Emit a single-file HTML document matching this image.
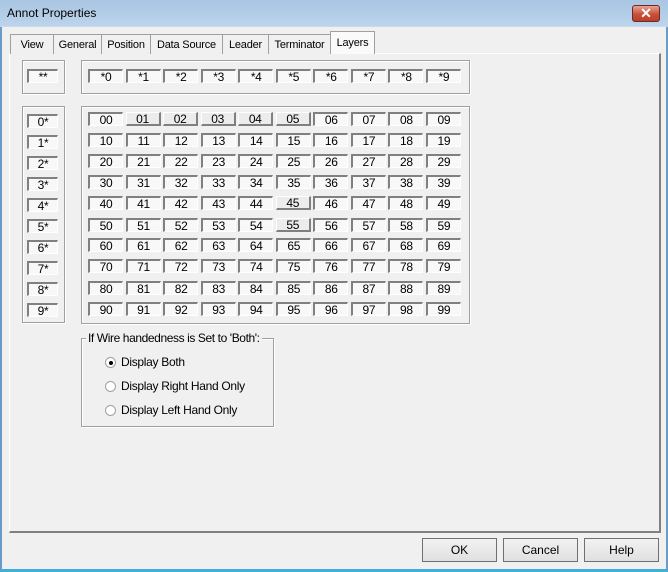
<!DOCTYPE html>
<html><head><style>
*{box-sizing:border-box;margin:0;padding:0}
body{width:668px;height:572px;overflow:hidden;background:#f0f0f0;font-family:"Liberation Sans",sans-serif;font-size:11px;color:#000;position:relative}
.win{position:absolute;inset:0;border-left:2px solid #6a9bc8;border-right:2px solid #6a9bc8;border-bottom:3px solid #3fb0d8;background:#f0f0f0}
.title{position:absolute;left:0;top:0;width:668px;height:27px;background:linear-gradient(#a9c5e2,#bcd4ec);border-bottom:1px solid #c9d9ea}
.title span{position:absolute;left:7px;top:6px;font-size:12px}
.close{position:absolute;left:632px;top:5px;width:28px;height:17px;border:1px solid #6b2a22;border-radius:3px;background:linear-gradient(#e8a392,#c7503b 55%,#b8402c);color:#fff;font-weight:bold;text-align:center;font-size:14px;line-height:15px}
.tab{position:absolute;top:34px;height:20px;border:1px solid #a0a0a0;border-bottom:none;background:#f0f0f0;padding:4px 0 0 0;text-align:center;white-space:nowrap;letter-spacing:-0.2px}
.tab.sel{top:31px;height:23px;background:#fafafa;z-index:2;padding-top:5px}
.panel{position:absolute;left:9px;top:53px;width:652px;height:480px;border-top:1px solid #fff;border-left:1px solid #fff;border-right:2px solid #808080;border-bottom:2px solid #808080;background:#f0f0f0}
.grp{position:absolute;border:1px solid #a0a0a0;box-shadow:1px 1px 0 #fff inset,1px 1px 0 #fff}
.c{position:absolute;height:14px;width:35px;text-align:center;line-height:12px;font-size:12px;border-top:2px solid #808080;border-left:2px solid #808080;border-right:1px solid #fff;border-bottom:1px solid #fff;background:#f8f8f8;letter-spacing:-0.3px}
.row{position:absolute;left:88px;height:14px;width:380px}
.row .c{position:relative;display:inline-block;margin-right:2.55px;float:left}
.r{border-top:1px solid #fff;border-left:1px solid #fff;border-right:2px solid #808080;border-bottom:2px solid #808080;background:#ececec;line-height:12px}
.btn{position:absolute;top:538px;width:75px;height:24px;border:1px solid #707070;background:linear-gradient(#f2f2f2,#e0e0e0);text-align:center;line-height:22px;font-size:12px}
.rad{position:absolute;left:105px;}
.rad i{position:absolute;left:0;top:1px;width:11px;height:11px;border-radius:50%;border:1px solid #a0a0a0;background:#fff}
.rad i b{position:absolute;left:3px;top:3px;width:4px;height:4px;border-radius:50%;background:#000}
.rad span{position:absolute;left:16px;top:-1px;white-space:nowrap;letter-spacing:-0.3px;font-size:12px}
</style></head><body>
<div class="win"></div>
<div class="title"><span>Annot Properties</span><div class="close">✕</div></div>
<div class="panel"></div>
<div class="tab" style="left:10px;width:44px">View</div>
<div class="tab" style="left:53px;width:49px">General</div>
<div class="tab" style="left:101px;width:50px">Position</div>
<div class="tab" style="left:150px;width:73px">Data Source</div>
<div class="tab" style="left:222px;width:47px">Leader</div>
<div class="tab" style="left:268px;width:63px">Terminator</div>
<div class="tab sel" style="left:330px;width:45px">Layers</div>

<div class="grp" style="left:22px;top:60px;width:43px;height:34px"></div>
<div class="grp" style="left:81px;top:60px;width:389px;height:34px"></div>
<div class="grp" style="left:22px;top:106px;width:43px;height:217px"></div>
<div class="grp" style="left:81px;top:106px;width:389px;height:218px"></div>

<div class="c" style="left:27px;top:69px;width:31px">**</div>
<div class="row" style="top:69px"><div class="c">*0</div><div class="c">*1</div><div class="c">*2</div><div class="c">*3</div><div class="c">*4</div><div class="c">*5</div><div class="c">*6</div><div class="c">*7</div><div class="c">*8</div><div class="c">*9</div></div>

<div class="c" style="left:27px;top:114px;width:31px">0*</div>
<div class="c" style="left:27px;top:135px;width:31px">1*</div>
<div class="c" style="left:27px;top:156px;width:31px">2*</div>
<div class="c" style="left:27px;top:177px;width:31px">3*</div>
<div class="c" style="left:27px;top:198px;width:31px">4*</div>
<div class="c" style="left:27px;top:219px;width:31px">5*</div>
<div class="c" style="left:27px;top:240px;width:31px">6*</div>
<div class="c" style="left:27px;top:261px;width:31px">7*</div>
<div class="c" style="left:27px;top:282px;width:31px">8*</div>
<div class="c" style="left:27px;top:303px;width:31px">9*</div>

<div class="row" style="top:112px"><div class="c">00</div><div class="c r">01</div><div class="c r">02</div><div class="c r">03</div><div class="c r">04</div><div class="c r">05</div><div class="c">06</div><div class="c">07</div><div class="c">08</div><div class="c">09</div></div>
<div class="row" style="top:133px"><div class="c">10</div><div class="c">11</div><div class="c">12</div><div class="c">13</div><div class="c">14</div><div class="c">15</div><div class="c">16</div><div class="c">17</div><div class="c">18</div><div class="c">19</div></div>
<div class="row" style="top:154px"><div class="c">20</div><div class="c">21</div><div class="c">22</div><div class="c">23</div><div class="c">24</div><div class="c">25</div><div class="c">26</div><div class="c">27</div><div class="c">28</div><div class="c">29</div></div>
<div class="row" style="top:175px"><div class="c">30</div><div class="c">31</div><div class="c">32</div><div class="c">33</div><div class="c">34</div><div class="c">35</div><div class="c">36</div><div class="c">37</div><div class="c">38</div><div class="c">39</div></div>
<div class="row" style="top:196px"><div class="c">40</div><div class="c">41</div><div class="c">42</div><div class="c">43</div><div class="c">44</div><div class="c r">45</div><div class="c">46</div><div class="c">47</div><div class="c">48</div><div class="c">49</div></div>
<div class="row" style="top:218px"><div class="c">50</div><div class="c">51</div><div class="c">52</div><div class="c">53</div><div class="c">54</div><div class="c r">55</div><div class="c">56</div><div class="c">57</div><div class="c">58</div><div class="c">59</div></div>
<div class="row" style="top:238px"><div class="c">60</div><div class="c">61</div><div class="c">62</div><div class="c">63</div><div class="c">64</div><div class="c">65</div><div class="c">66</div><div class="c">67</div><div class="c">68</div><div class="c">69</div></div>
<div class="row" style="top:259px"><div class="c">70</div><div class="c">71</div><div class="c">72</div><div class="c">73</div><div class="c">74</div><div class="c">75</div><div class="c">76</div><div class="c">77</div><div class="c">78</div><div class="c">79</div></div>
<div class="row" style="top:281px"><div class="c">80</div><div class="c">81</div><div class="c">82</div><div class="c">83</div><div class="c">84</div><div class="c">85</div><div class="c">86</div><div class="c">87</div><div class="c">88</div><div class="c">89</div></div>
<div class="row" style="top:302px"><div class="c">90</div><div class="c">91</div><div class="c">92</div><div class="c">93</div><div class="c">94</div><div class="c">95</div><div class="c">96</div><div class="c">97</div><div class="c">98</div><div class="c">99</div></div>

<div class="grp" style="left:81px;top:338px;width:193px;height:89px"></div>
<div style="position:absolute;left:86px;top:331px;background:#f0f0f0;padding:0 2px;font-size:12px;letter-spacing:-0.4px">If Wire handedness is Set to 'Both':</div>
<div class="rad" style="top:356px"><i><b></b></i><span>Display Both</span></div>
<div class="rad" style="top:380px"><i></i><span>Display Right Hand Only</span></div>
<div class="rad" style="top:404px"><i></i><span>Display Left Hand Only</span></div>

<div class="btn" style="left:422px">OK</div>
<div class="btn" style="left:503px">Cancel</div>
<div class="btn" style="left:584px">Help</div>
</body></html>
